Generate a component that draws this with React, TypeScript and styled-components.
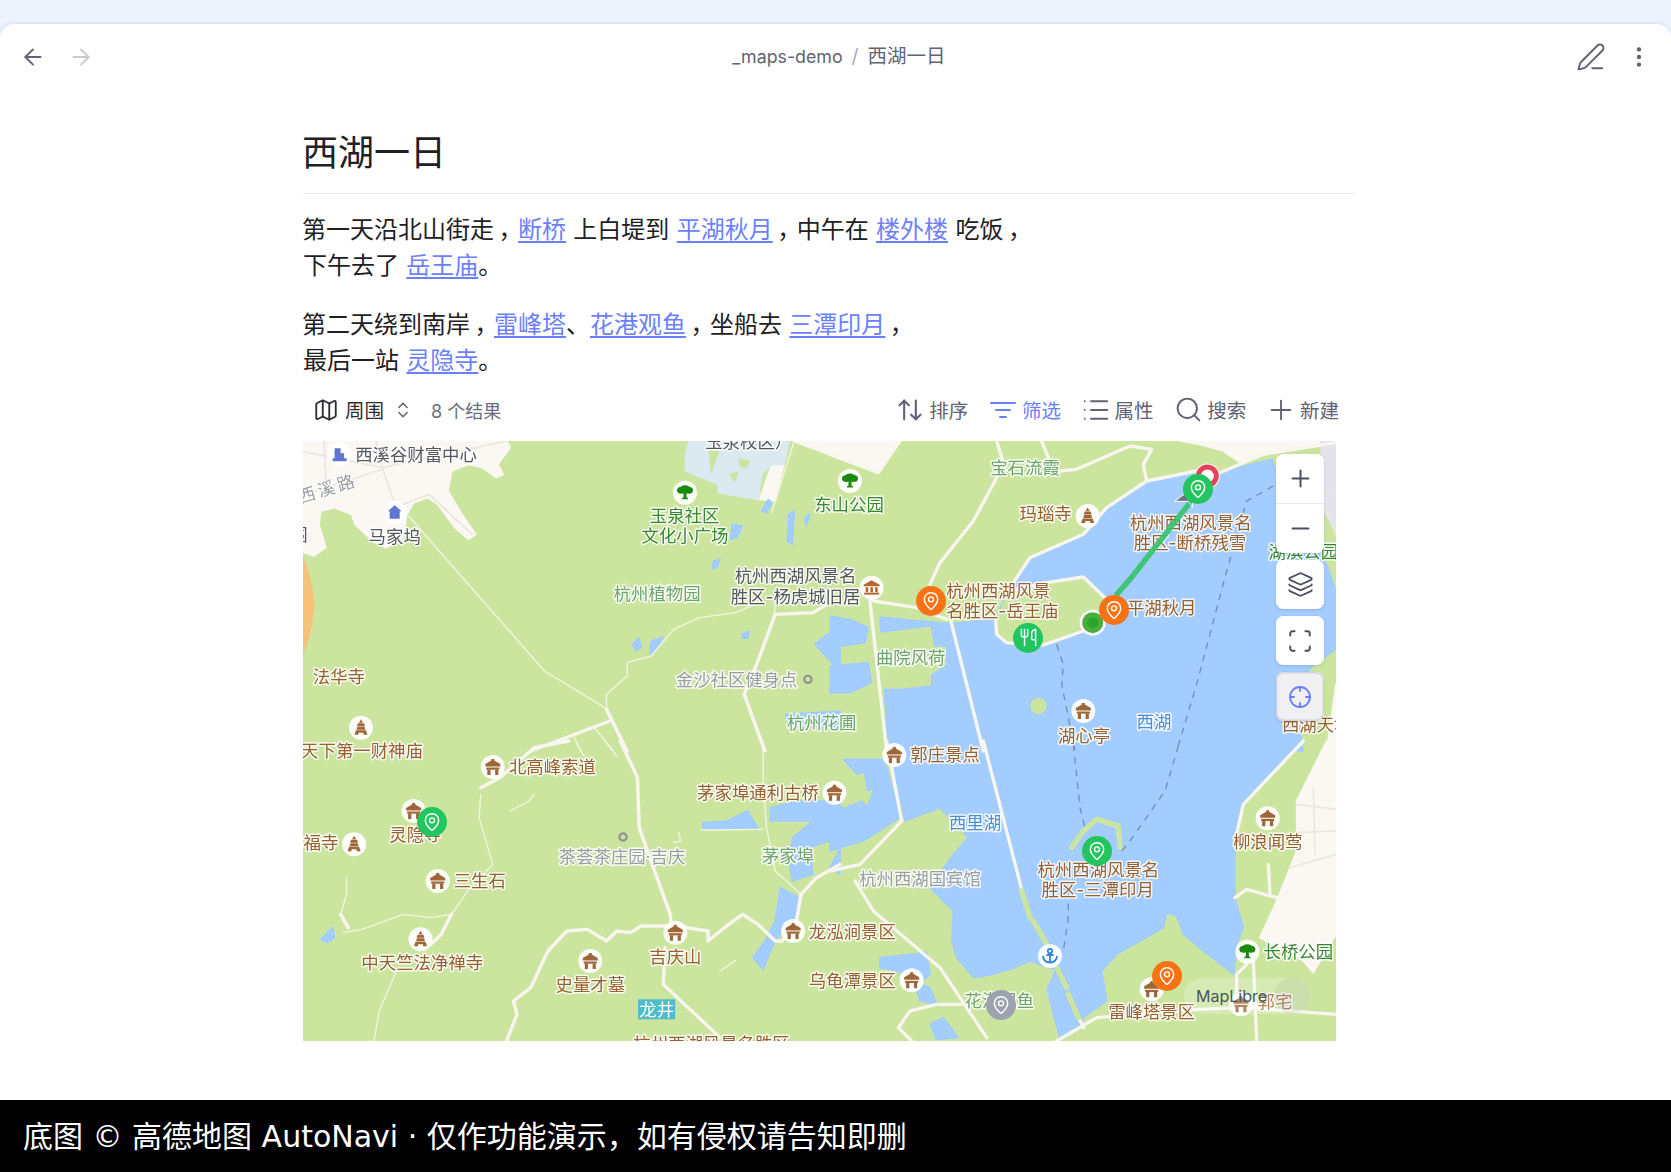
import React from "react";
import styled, { createGlobalStyle } from "styled-components";
import {
  ArrowLeft,
  ArrowRight,
  ArrowUpDown,
  ChevronsUpDown,
  Crosshair,
  EllipsisVertical,
  Layers,
  List,
  Map as MapIcon,
  MapPin,
  Minus,
  PenLine,
  Plus,
  Scan,
  Search,
  Utensils,
} from "lucide-react";

const FONT = `Inter, "Noto Sans CJK SC", sans-serif`;

const GlobalStyle = createGlobalStyle`
  html, body { margin: 0; padding: 0; background: #eef2fc; }
  body { font-family: ${FONT}; }
`;

const Page = styled.div`
  width: 1671px;
  height: 1172px;
  display: flex;
  flex-direction: column;
  padding-top: 24px;
  box-sizing: border-box;
  overflow: hidden;
  background: #eef2fc;
`;

const Card = styled.main`
  flex: 1;
  background: #fff;
  border-radius: 14px 14px 0 0;
  box-shadow: 0 0 4px rgba(92, 106, 196, 0.22);
`;

const Header = styled.header`
  height: 66px;
  padding: 0 19px 0 20px;
  display: grid;
  grid-template-columns: 1fr auto 1fr;
  align-items: center;
  color: #5f6372;
`;

const HeaderSide = styled.div<{ $end?: boolean }>`
  display: flex;
  align-items: center;
  gap: ${(p) => (p.$end ? "20px" : "22px")};
  justify-content: ${(p) => (p.$end ? "flex-end" : "flex-start")};
`;

const Faded = styled.span`
  display: flex;
  color: #c8cad2;
`;

const Crumbs = styled.nav`
  display: flex;
  align-items: baseline;
  gap: 9px;
  font-size: 19.5px;
  line-height: 30px;
  color: #5f6372;
  transform: translate(3px, -1px);
`;

const CrumbFolder = styled.span`
  font-size: 17.8px;
`;

const Slash = styled.span`
  color: #a9abb8;
`;

const Content = styled.div`
  width: 1051px;
  margin-left: 303px;
  padding-top: 38px;
`;

const Title = styled.h1`
  margin: 0;
  height: 50px;
  line-height: 50px;
  padding-bottom: 15px;
  border-bottom: 1px solid #e8e8ee;
  font-size: 36px;
  font-weight: 400;
  color: #1f2024;
  text-indent: -1px;
`;

const Para = styled.p`
  margin: 18px 0 23px;
  font-size: 24px;
  line-height: 36px;
  color: #1f2024;
  text-indent: -1px;
  word-spacing: 0.6px;
  & + & {
    margin-top: 0;
    margin-bottom: 0;
  }
`;

const Link = styled.a`
  color: #6b7fff;
  text-decoration: underline;
  text-decoration-thickness: 1.5px;
  text-underline-offset: 3px;
`;

const Pause = styled.span`
  display: inline-block;
  width: 24px;
  text-indent: 0;
  text-align: center;
  font-feature-settings: "palt";
`;

const Toolbar = styled.div`
  height: 60px;
  padding: 0 15px 1px 10px;
  display: flex;
  align-items: center;
  justify-content: space-between;
  color: #5f6372;
`;

const ToolGroup = styled.div`
  display: flex;
  align-items: center;
`;

const ViewName = styled.span`
  margin: 0 9px 0 6px;
  font-size: 19.5px;
  color: #2c2d33;
`;

const ResultCount = styled.span`
  margin-left: 18px;
  font-size: 18px;
  color: #6c6f7c;
`;

const ToolButton = styled.button<{ $active?: boolean }>`
  all: unset;
  width: 92.7px;
  display: flex;
  align-items: center;
  justify-content: flex-end;
  gap: 6px;
  font-size: 19.5px;
  color: ${(p) => (p.$active ? "#6b7fff" : "#5f6372")};
`;

const ToolIcon = styled.span`
  width: 26px;
  height: 26px;
  display: flex;
  align-items: center;
  justify-content: center;
  & > svg {
    flex: none;
  }
`;

const MapFrame = styled.section`
  position: relative;
  width: 1033px;
  height: 600px;
  overflow: hidden;
  background: #cbe59f;
`;

const MapCanvas = styled.svg`
  display: block;
  width: 100%;
  height: 100%;
  filter: blur(0.35px);
`;

const LABEL_COLORS = {
  brown: "#98602f",
  grey: "#55575e",
  faint: "#9a9ea0",
  green: "#35882e",
  park: "#6ea56a",
  blue: "#4b8ed6",
  white: "#ffffff",
};

type LabelKind = keyof typeof LABEL_COLORS;

const MapLabel = styled.text<{ $kind: LabelKind; $wide?: boolean }>`
  font-family: ${FONT};
  font-size: 17.4px;
  letter-spacing: ${(p) => (p.$wide ? "3px" : "0")};
  dominant-baseline: central;
  paint-order: stroke;
  stroke: ${(p) => (p.$kind === "white" ? "none" : "rgba(255,255,255,0.85)")};
  stroke-width: 3px;
  stroke-linejoin: round;
  fill: ${(p) => LABEL_COLORS[p.$kind]};
`;

const Marker = styled.div<{ $tone: "green" | "orange" | "grey" }>`
  position: absolute;
  width: 30px;
  height: 30px;
  margin: -15px 0 0 -15px;
  border-radius: 50%;
  display: flex;
  align-items: center;
  justify-content: center;
  color: #fff;
  background: ${(p) => ({ green: "#22c55e", orange: "#f97316", grey: "#9ca3af" })[p.$tone]};
`;

const Controls = styled.div`
  position: absolute;
  top: 13px;
  right: 12px;
  display: flex;
  flex-direction: column;
  gap: 7px;
  color: #4b4f5e;
`;

const ControlGroup = styled.div`
  display: flex;
  flex-direction: column;
  border-radius: 8px;
  background: #fff;
  box-shadow: 0 1px 3px rgba(60, 64, 90, 0.18);
  overflow: hidden;
`;

const ControlButton = styled.button<{ $on?: boolean }>`
  all: unset;
  width: 48px;
  height: 49px;
  display: flex;
  align-items: center;
  justify-content: center;
  color: ${(p) => (p.$on ? "#6b7fff" : "inherit")};
  background: ${(p) => (p.$on ? "#f0f0f2" : "#fff")};
  box-shadow: ${(p) => (p.$on ? "inset 0 0 0 1.5px #d4d5da" : "none")};
  border-radius: ${(p) => (p.$on ? "8px" : "0")};
  & + & {
    border-top: 1px solid #e8e8f4;
  }
`;

const Attribution = styled.div`
  position: absolute;
  right: 26px;
  bottom: 27px;
  width: 126px;
  height: 36px;
  padding-left: 12px;
  box-sizing: border-box;
  display: flex;
  align-items: center;
  justify-content: space-between;
  border-radius: 18px;
  background: rgba(255, 255, 255, 0.22);
  font-size: 16px;
  color: #4b5563;
`;

const AttributionDot = styled.span`
  width: 36px;
  height: 36px;
  border-radius: 50%;
  background: rgba(120, 120, 120, 0.1);
`;

const Footer = styled.footer`
  height: 72px;
  padding: 0 0 5px 23px;
  box-sizing: border-box;
  display: flex;
  align-items: center;
  background: #000;
  color: #fff;
  font-family: "DejaVu Sans", "Noto Sans CJK SC", sans-serif;
  font-size: 30px;
`;

// the map is traced from four crops of the reference, each with its own scale
const SHEETS = {
  a: { ox: 300, oy: 430, sx: 2.904 },
  b: { ox: 830, oy: 430, sx: 3 },
  c: { ox: 300, oy: 740, sx: 2.904 },
  d: { ox: 830, oy: 740, sx: 3 },
};
type SheetKey = keyof typeof SHEETS;
const at = (s: SheetKey, x: number, y: number) => ({
  x: SHEETS[s].ox + x / SHEETS[s].sx,
  y: SHEETS[s].oy + y / 3,
});

const sheetGroup = (s: SheetKey) =>
  `translate(${SHEETS[s].ox} ${SHEETS[s].oy}) scale(${1 / SHEETS[s].sx} ${1 / 3})`;

type Shapes = Partial<Record<SheetKey, string[]>>;

const URBAN: Shapes = {
  a: [
    "0,30 600,30 610,50 575,100 590,130 570,140 530,110 490,100 440,120 430,180 470,250 510,310 490,325 450,290 400,220 370,200 330,215 310,250 300,320 250,350 210,330 160,280 150,250 100,230 60,240 55,280 75,350 40,375 0,360",
    "1370,100 1405,100 1380,210 1335,205",
    "1440,30 1568,30 1568,80",
  ],
  b: [
    "0,30 210,30 145,125 0,70",
    "1050,30 1518,30 1518,40 1340,60 1230,95 1180,60 1110,40",
    "1518,760 1490,960 1518,960",
  ],
  d: ["1518,0 1490,0 1400,180 1400,330 1340,480 1290,590 1420,660 1450,695 1518,580"],
};

const WATER: Shapes = {
  a: [
    "1495,640 1530,610 1568,615 1568,730 1540,690",
    "1410,850 1568,840 1568,890 1420,880",
    "965,640 985,620 990,650 975,660",
    "1020,630 1055,618 1030,660 1015,670",
    "1283,610 1305,600 1300,622 1285,622",
    "1255,280 1285,285 1270,320 1250,325",
    "1420,250 1435,240 1430,340 1415,330",
    "1465,260 1480,250 1470,285",
    "1340,240 1360,205 1370,215 1355,245",
    "1200,390 1220,385 1210,410 1198,412",
  ],
  b: [
    "600,380 760,310 830,230 950,150 1100,120 1170,125 1206,114 1327,84 1342,135 1492,405 1518,480 1518,654 1447,705 1387,780 1420,960 460,960 355,578 495,565 540,470",
    "150,558 355,578 460,960 175,960",
    "0,555 60,565 115,590 105,635 40,645 0,635",
    "0,705 115,695 125,755 60,785 0,785",
  ],
  c: [
    "1170,245 1240,240 1300,210 1330,262 1170,265",
    "1365,200 1450,180 1568,180 1568,290 1480,320 1490,400 1430,420 1420,360 1430,290 1490,240 1365,240",
    "1395,440 1450,470 1440,540 1400,570 1370,620 1345,685 1315,650 1350,600 1380,540",
    "60,595 95,560 100,590 80,605",
    "1568,320 1568,400 1540,380",
  ],
  d: [
    "170,0 460,0 570,440 750,860 690,895 640,700 600,670 520,690 440,720 380,650 365,600 370,510 300,440 370,340 415,290 330,200 225,240",
    "460,0 1420,0 1240,190 1215,300 1215,470 1240,560 1220,610 1212,700 1120,630 1060,580 1040,525 1010,515 1000,560 860,640 815,690 830,780 760,830 750,860 570,440",
    "40,55 165,55 210,230 100,300 0,330 0,200 55,200 90,110",
    "150,650 290,635 300,700 280,720 200,690 150,680",
    "250,720 300,740 320,790 270,780",
    "300,850 340,830 385,890 320,895",
  ],
};

const PALE: Shapes = {
  a: ["1130,30 1420,30 1405,100 1370,100 1340,130 1330,205 1215,185 1215,160 1120,120 1120,70"],
};

const LAND: Shapes = {
  a: ["1275,85 1305,90 1295,110 1280,105", "1250,130 1270,125 1262,150", "1190,60 1215,60 1195,120"],
  b: [
    "498,570 540,478 650,455 760,438 835,510 825,560 760,600 640,642 530,635 497,610",
    "135,610 300,590 310,650 345,650 345,700 300,730 300,760 220,770 135,770",
  ],
  d: [
    "400,720 520,700 600,665 670,690 640,760 560,830 590,880 520,900 440,900 380,780",
    "60,110 100,100 110,170 60,190",
    "90,160 125,150 110,190",
  ],
};

const VIOLET = "1470,30 1518,30 1518,310 1480,240";

const MAJOR: Shapes = {
  a: [
    "890,835 950,960",
    "900,870 670,960",
    "1380,550 1330,690 1290,790 1350,960",
    "1380,550 1490,545 1530,520",
    "1435,30 1568,80",
  ],
  b: [
    "210,30 145,125 0,70",
    "120,480 130,510 260,530",
    "360,560 460,960",
    "120,510 170,960",
    "300,460 330,395 430,270 500,140 510,100",
    "500,30 525,110",
    "635,30 655,80",
    "690,120 740,115 900,45 965,55 940,100 950,150",
    "600,380 760,310 830,230 950,150 1100,120",
    "1170,125 1300,70 1518,35",
    "600,380 540,470",
    "540,478 650,455 760,438 835,510",
    "497,570 500,610 530,635 640,642 760,600",
    "350,565 260,530",
  ],
  c: [
    "930,0 980,110 985,260 1075,520 1080,570",
    "600,900 630,820 620,780 670,740 720,630 775,570 835,565 890,600 920,570 960,575 990,555 1090,555 1185,570 1185,600 1245,550 1285,520 1330,550 1380,600 1400,600",
    "1060,620 1055,730 1220,890",
    "525,140 580,110 680,20 780,0",
    "440,520 410,580 380,610",
    "118,520 140,560",
    "1568,370 1500,410 1455,460 1440,550 1400,600",
  ],
  d: [
    "170,0 215,240 90,370 0,390",
    "75,420 130,510 330,680 470,890",
    "460,0 575,445",
    "745,830 762,860",
    "680,900 800,830 1100,805 1240,800 1518,820",
    "1420,0 1240,190 1215,300",
    "1215,470 1250,445 1340,470",
    "1315,370 1320,460",
    "1270,660 1280,900",
    "1220,780 1220,700 1250,670",
    "400,790 320,790 240,810 205,860 245,900",
  ],
};

const MINOR: Shapes = {
  a: [
    "315,255 710,720 885,830",
    "950,735 890,790 890,830",
    "950,735 950,695 1020,675 1085,595 1160,560 1265,545 1320,520",
    "855,890 910,960",
    "795,915 815,960",
    "1435,30 1370,245",
    "1380,520 1378,550",
  ],
  c: [
    "525,160 520,230 560,370 490,445 440,520 380,530 300,520 180,565 125,575",
    "280,690 230,810 215,900",
    "135,410 135,460 118,520",
    "1345,0 1345,130 1355,260 1380,390 1455,460",
    "885,0 920,45",
    "800,0 825,45",
    "610,210 665,180 680,160",
    "1165,267 1345,265",
    "1100,275 1105,300 1085,305",
    "1220,690 1265,658",
  ],
};

const URBAN_ROADS: Shapes = {
  a: [
    "0,60 240,110 600,30",
    "0,195 240,115 275,215",
    "300,220 375,190 500,310",
    "70,30 75,150",
    "220,30 240,110",
  ],
  b: ["1518,190 1490,185", "1490,240 1518,310"],
  d: ["1400,190 1518,205", "1400,275 1518,270", "1380,380 1518,340", "1450,140 1455,340"],
};

const GREEN_RIBS: Shapes = {
  d: ["575,450 600,530", "610,540 650,610", "680,680 710,740", "715,760 745,830", "760,270 800,235 865,255 870,320", "725,320 760,270"],
};

const LANES: Shapes = {
  b: ["1330,165 1250,210 1190,420 1100,760 1040,960", "680,640 700,700 695,760 735,960"],
  d: ["1045,15 1005,150 900,300 875,330", "730,10 750,200 765,260", "715,450 715,530 700,630"],
};

const LABELS: [SheetKey, number, number, string, LabelKind][] = [
  ["a", 337, 70, "西溪谷财富中心", "grey"],
  ["a", 275, 315, "马家坞", "grey"],
  ["a", 1303, 32, "玉泉校区）", "grey"],
  ["a", -3, 310, "围", "grey"],
  ["a", 1117, 253, "玉泉社区", "green"],
  ["a", 1118, 313, "文化小广场", "green"],
  ["a", 1037, 488, "杭州植物园", "park"],
  ["a", 1268, 745, "金沙社区健身点", "faint"],
  ["a", 113, 735, "法华寺", "brown"],
  ["a", 1515, 875, "杭州花圃", "park"],
  ["c", 180, 28, "天下第一财神庙", "brown"],
  ["b", 57, 220, "东山公园", "green"],
  ["b", 585, 110, "宝石流霞", "park"],
  ["b", 647, 248, "玛瑙寺", "brown"],
  ["a", 1439, 433, "杭州西湖风景名", "grey"],
  ["a", 1439, 495, "胜区-杨虎城旧居", "grey"],
  ["b", 1082, 273, "杭州西湖风景名", "brown"],
  ["b", 1080, 333, "胜区-断桥残雪", "brown"],
  ["b", 505, 478, "杭州西湖风景", "brown"],
  ["b", 517, 538, "名胜区-岳王庙", "brown"],
  ["b", 995, 530, "平湖秋月", "brown"],
  ["b", 242, 678, "曲院风荷", "park"],
  ["b", 762, 912, "湖心亭", "brown"],
  ["b", 972, 870, "西湖", "blue"],
  ["b", 1460, 880, "西湖天地", "brown"],
  ["b", 1420, 360, "湖滨公园", "green"],
  ["d", 345, 40, "郭庄景点", "brown"],
  ["c", 733, 77, "北高峰索道", "brown"],
  ["c", 1330, 153, "茅家埠通利古桥", "brown"],
  ["c", 335, 280, "灵隐寺", "brown"],
  ["c", 61, 305, "福寺", "brown"],
  ["c", 522, 417, "三生石", "brown"],
  ["c", 935, 345, "茶荟茶庄园·吉庆", "faint"],
  ["c", 1417, 342, "茅家埠", "park"],
  ["c", 355, 665, "中天竺法净禅寺", "brown"],
  ["c", 1090, 647, "吉庆山", "brown"],
  ["c", 843, 730, "史量才墓", "brown"],
  ["c", 1195, 908, "杭州西湖风景名胜区", "brown"],
  ["d", 67, 570, "龙泓涧景区", "brown"],
  ["d", 67, 717, "乌龟潭景区", "brown"],
  ["d", 435, 245, "西里湖", "blue"],
  ["d", 270, 413, "杭州西湖国宾馆", "faint"],
  ["d", 805, 385, "杭州西湖风景名", "brown"],
  ["d", 803, 445, "胜区-三潭印月", "brown"],
  ["d", 1313, 300, "柳浪闻莺", "brown"],
  ["d", 1405, 632, "长桥公园", "green"],
  ["d", 508, 778, "花港观鱼", "park"],
  ["d", 965, 812, "雷峰塔景区", "brown"],
  ["d", 1335, 782, "郭宅", "brown"],
];

const PAVILIONS: [SheetKey, number, number][] = [
  ["c", 560, 78],
  ["c", 330, 210],
  ["c", 400, 420],
  ["c", 1090, 575],
  ["c", 843, 660],
  ["c", 1432, 570],
  ["c", 1552, 155],
  ["d", 193, 42],
  ["d", 245, 718],
  ["d", 965, 745],
  ["d", 1233, 790],
  ["d", 1313, 232],
  ["b", 760, 840],
];
const PAGODAS: [SheetKey, number, number][] = [
  ["a", 177, 890],
  ["b", 773, 255],
  ["c", 157, 310],
  ["c", 350, 595],
];
const TREES: [SheetKey, number, number][] = [
  ["a", 1118, 185],
  ["b", 60, 150],
  ["d", 1252, 632],
];

const Poi = ({ s, x, y, icon }: { s: SheetKey; x: number; y: number; icon: string }) => {
  const p = at(s, x, y);
  return (
    <g transform={`translate(${p.x} ${p.y})`}>
      <circle r="12" fill="#fff" fillOpacity="0.95" />
      <use href={`#${icon}`} />
    </g>
  );
};

const MARKERS: { s: SheetKey; x: number; y: number; tone: "green" | "orange" | "grey"; food?: boolean }[] = [
  { s: "b", x: 303, y: 510, tone: "orange" },
  { s: "b", x: 853, y: 537, tone: "orange" },
  { s: "d", x: 1011, y: 705, tone: "orange" },
  { s: "b", x: 1105, y: 175, tone: "green" },
  { s: "b", x: 595, y: 620, tone: "green", food: true },
  { s: "c", x: 383, y: 242, tone: "green" },
  { s: "d", x: 800, y: 330, tone: "green" },
  { s: "d", x: 512, y: 792, tone: "grey" },
];

const polygons = (shapes: Shapes, fill: string) =>
  (Object.keys(shapes) as SheetKey[]).map((s) => (
    <g key={s} transform={sheetGroup(s)} fill={fill} stroke={fill} strokeWidth="5" strokeLinejoin="round">
      {shapes[s]!.map((points) => (
        <polygon key={points} points={points} />
      ))}
    </g>
  ));

const lines = (shapes: Shapes, stroke: string, width: number, dash?: string) =>
  (Object.keys(shapes) as SheetKey[]).map((s) => (
    <g
      key={s}
      transform={sheetGroup(s)}
      fill="none"
      stroke={stroke}
      strokeWidth={width}
      strokeLinecap={dash ? "butt" : "round"}
      strokeLinejoin="round"
      strokeDasharray={dash}
    >
      {shapes[s]!.map((points) => (
        <polyline key={points} points={points} />
      ))}
    </g>
  ));

const MapSymbols = () => (
  <defs>
    <g id="pavilion" fill="#9f6638">
      <path d="M-1.5-8h3v1.5L7.5-3v2.5h-15V-3l6-3.5Z" />
      <path d="M-6.5.5h13v2.2h-13Z" />
      <path d="M-5.5 2.5h3.2V8h-3.2ZM2.3 2.5h3.2V8H2.3Z" />
    </g>
    <g id="pagoda" fill="#9f6638">
      <path d="M0-8.5 2-5H-2Z" />
      <path d="M-3-4.5h6l1 3h-8Z" />
      <path d="M-3.5-1h7l1 3h-9Z" />
      <path d="M-5 2.5H5l1.5 4.5h-4v-2h-5v2h-4Z" />
    </g>
    <g id="tree" fill="#198a0c">
      <ellipse cx="-3.5" cy="-2.5" rx="4.5" ry="3.5" />
      <ellipse cx="3.5" cy="-2.5" rx="4.5" ry="3.5" />
      <ellipse cx="0" cy="-4.5" rx="4.5" ry="3" />
      <path d="M-1.2-2h2.4l.5 7H3v1.5h-6V5h1.3Z" />
    </g>
    <g id="museum" fill="#b5682f">
      <path d="M0-7.5 8-3v1.5H-8V-3Z" />
      <path d="M-6-.5h2.6v5H-6ZM-1.3-.5h2.6v5h-2.6ZM3.4-.5H6v5H3.4Z" />
      <path d="M-7.5 5h15v2h-15Z" />
    </g>
    <g id="home" fill="#6076d2">
      <path d="M0-7.5 7-1.5H5V6H-5V-1.5H-7Z" />
    </g>
    <g id="tower" fill="#6076d2">
      <path d="M-5-6H1V4H-5ZM1-1h3.5V4H1ZM-7 4H7V7H-7Z" />
    </g>
    <g id="anchor" fill="none" stroke="#2b86d8" strokeWidth="1.8">
      <circle cy="-5" r="2.2" />
      <path d="M0-3V6M-7 0c0 4 3 6.5 7 6.5S7 4 7 0M-3.5-1h7" />
    </g>
  </defs>
);

const WestLakeMap = () => {
  const red = at("b", 1132, 135);
  const dot = at("b", 788, 575);
  const jinsha = at("a", 1475, 745);
  const chahui = at("c", 938, 288);
  const islet = at("b", 625, 825);
  const route = [at("b", 860, 490), at("b", 900, 445), at("b", 1080, 215)]
    .map((p) => `${p.x},${p.y}`)
    .join(" ");
  const wedge = at("b", 1070, 205);
  const longjing = at("c", 982, 775);
  const blob = at("a", 10, 370);
  const roadName = at("a", 80, 172);
  return (
    <MapFrame>
      <MapCanvas viewBox="303 440 1033 600">
        <MapSymbols />
        <rect x="303" y="440" width="1033" height="600" fill="#cbe59f" />
        {polygons(URBAN, "#fbf8f3")}
        <path
          d={`M${blob.x - 1} ${blob.y}Q${blob.x + 14} ${blob.y + 40} ${blob.x + 10} ${blob.y + 60}Q${blob.x + 8} ${blob.y + 80} ${blob.x - 1} ${blob.y + 103}Z`}
          fill="#f7c177"
        />
        {polygons(PALE, "#dbe9f0")}
        <g transform={sheetGroup("b")} fill="#e4e2ec">
          <polygon points={VIOLET} />
        </g>
        {polygons(LAND, "#cbe59f")}
        {polygons(WATER, "#a3ccff")}
        {polygons({ b: LAND.b, d: LAND.d }, "#cbe59f")}
        <circle cx={islet.x} cy={islet.y} r="8" fill="#cbe59f" />
        {lines(URBAN_ROADS, "#ebe7de", 5)}
        {lines(MINOR, "#f1f5df", 4)}
        {lines(MAJOR, "#f8f6ef", 10)}
        {lines(GREEN_RIBS, "#cbe59f", 16)}
        {lines(LANES, "#6f8fb3", 4, "20 18")}
        {LABELS.map(([s, x, y, text, kind]) => {
          const p = at(s, x, y);
          return (
            <MapLabel key={text + x} x={p.x} y={p.y} textAnchor="middle" $kind={kind}>
              {text}
            </MapLabel>
          );
        })}
        <MapLabel
          x={roadName.x}
          y={roadName.y}
          textAnchor="middle"
          $kind="faint"
          $wide
          transform={`rotate(-17 ${roadName.x} ${roadName.y})`}
        >
          西溪路
        </MapLabel>
        <rect x={longjing.x} y={longjing.y} width="37" height="20" fill="#4dbdca" />
        <MapLabel x={longjing.x + 18.5} y={longjing.y + 10} textAnchor="middle" $kind="white">
          龙井
        </MapLabel>
        {PAVILIONS.map(([s, x, y]) => (
          <Poi key={s + x} s={s} x={x} y={y} icon="pavilion" />
        ))}
        {PAGODAS.map(([s, x, y]) => (
          <Poi key={s + x} s={s} x={x} y={y} icon="pagoda" />
        ))}
        {TREES.map(([s, x, y]) => (
          <Poi key={s + x} s={s} x={x} y={y} icon="tree" />
        ))}
        <Poi s="b" x={125} y={470} icon="museum" />
        <Poi s="a" x={275} y={245} icon="home" />
        <Poi s="a" x={115} y={70} icon="tower" />
        <Poi s="d" x={660} y={645} icon="anchor" />
        <circle cx={jinsha.x} cy={jinsha.y} r="3.6" fill="none" stroke="#8e9196" strokeWidth="2.2" />
        <circle cx={chahui.x} cy={chahui.y} r="3.6" fill="none" stroke="#8e9196" strokeWidth="2.2" />
        <circle cx={red.x} cy={red.y} r="12.5" fill="#fff" />
        <circle cx={red.x} cy={red.y} r="9" fill="none" stroke="#e2445c" strokeWidth="5" />
        <circle cx={dot.x} cy={dot.y} r="13" fill="#fff" />
        <circle cx={dot.x} cy={dot.y} r="10.5" fill="#4bae3c" />
        <circle cx={dot.x} cy={dot.y} r="5.5" fill="#2aa52a" />
        <polyline
          points={route}
          fill="none"
          stroke="#36c36d"
          strokeWidth="5.5"
          strokeLinecap="round"
          strokeLinejoin="round"
          strokeOpacity="0.92"
        />
        <path
          transform={`translate(${wedge.x} ${wedge.y})`}
          d="M-12 2 4-10 6 8 2 2Z"
          fill="#6b7280"
          stroke="#fff"
          strokeWidth="1"
        />
      </MapCanvas>
      {MARKERS.map((m) => {
        const p = at(m.s, m.x, m.y);
        return (
          <Marker key={m.s + m.x} $tone={m.tone} style={{ left: p.x - 303, top: p.y - 440 }}>
            {m.food ? <Utensils size={19} strokeWidth={1.8} /> : <MapPin size={20} strokeWidth={1.7} />}
          </Marker>
        );
      })}
      <Controls>
        <ControlGroup>
          <ControlButton>
            <Plus size={27} strokeWidth={1.8} />
          </ControlButton>
          <ControlButton>
            <Minus size={27} strokeWidth={1.8} />
          </ControlButton>
        </ControlGroup>
        <ControlGroup>
          <ControlButton>
            <Layers size={27} strokeWidth={1.6} />
          </ControlButton>
        </ControlGroup>
        <ControlGroup>
          <ControlButton>
            <Scan size={26} strokeWidth={1.8} />
          </ControlButton>
        </ControlGroup>
        <ControlGroup>
          <ControlButton $on>
            <Crosshair size={24} strokeWidth={1.8} />
          </ControlButton>
        </ControlGroup>
      </Controls>
      <Attribution>
        MapLibre
        <AttributionDot />
      </Attribution>
    </MapFrame>
  );
};

const FilterIcon = () => (
  <svg width="26" height="26" viewBox="0 0 26 26" fill="none" stroke="currentColor" strokeWidth="2" strokeLinecap="round">
    <path d="M1 6h24M6 13h14M10 20h6" />
  </svg>
);

export default function App() {
  return (
    <Page>
      <GlobalStyle />
      <Card>
        <Header>
          <HeaderSide>
            <ArrowLeft size={26} strokeWidth={1.8} />
            <Faded>
              <ArrowRight size={26} strokeWidth={1.8} />
            </Faded>
          </HeaderSide>
          <Crumbs>
            <CrumbFolder>_maps-demo</CrumbFolder>
            <Slash>/</Slash>
            <span>西湖一日</span>
          </Crumbs>
          <HeaderSide $end>
            <PenLine size={30} strokeWidth={1.5} />
            <EllipsisVertical size={26} strokeWidth={2} />
          </HeaderSide>
        </Header>
        <Content>
          <Title>西湖一日</Title>
          <Para>
            第一天沿北山街走<Pause>，</Pause>
            <Link>断桥</Link> 上白堤到 <Link>平湖秋月</Link>
            <Pause>，</Pause>中午在 <Link>楼外楼</Link> 吃饭<Pause>，</Pause>
            <br />
            下午去了 <Link>岳王庙</Link>。
          </Para>
          <Para>
            第二天绕到南岸<Pause>，</Pause>
            <Link>雷峰塔</Link>、<Link>花港观鱼</Link>
            <Pause>，</Pause>坐船去 <Link>三潭印月</Link>
            <Pause>，</Pause>
            <br />
            最后一站 <Link>灵隐寺</Link>。
          </Para>
          <Toolbar style={{ height: 61 }}>
            <ToolGroup>
              <MapIcon size={26} strokeWidth={1.7} color="#2c2d33" />
              <ViewName>周围</ViewName>
              <ChevronsUpDown size={20} strokeWidth={1.7} />
              <ResultCount>8 个结果</ResultCount>
            </ToolGroup>
            <ToolGroup>
              <ToolButton>
                <ToolIcon>
                  <ArrowUpDown size={28} strokeWidth={1.8} />
                </ToolIcon>
                排序
              </ToolButton>
              <ToolButton $active>
                <ToolIcon>
                  <FilterIcon />
                </ToolIcon>
                筛选
              </ToolButton>
              <ToolButton>
                <ToolIcon>
                  <List size={30} strokeWidth={1.5} />
                </ToolIcon>
                属性
              </ToolButton>
              <ToolButton>
                <ToolIcon>
                  <Search size={29} strokeWidth={1.6} />
                </ToolIcon>
                搜索
              </ToolButton>
              <ToolButton>
                <ToolIcon>
                  <Plus size={32} strokeWidth={1.4} />
                </ToolIcon>
                新建
              </ToolButton>
            </ToolGroup>
          </Toolbar>
          <WestLakeMap />
        </Content>
      </Card>
      <Footer>底图 © 高德地图 AutoNavi · 仅作功能演示，如有侵权请告知即删</Footer>
    </Page>
  );
}
